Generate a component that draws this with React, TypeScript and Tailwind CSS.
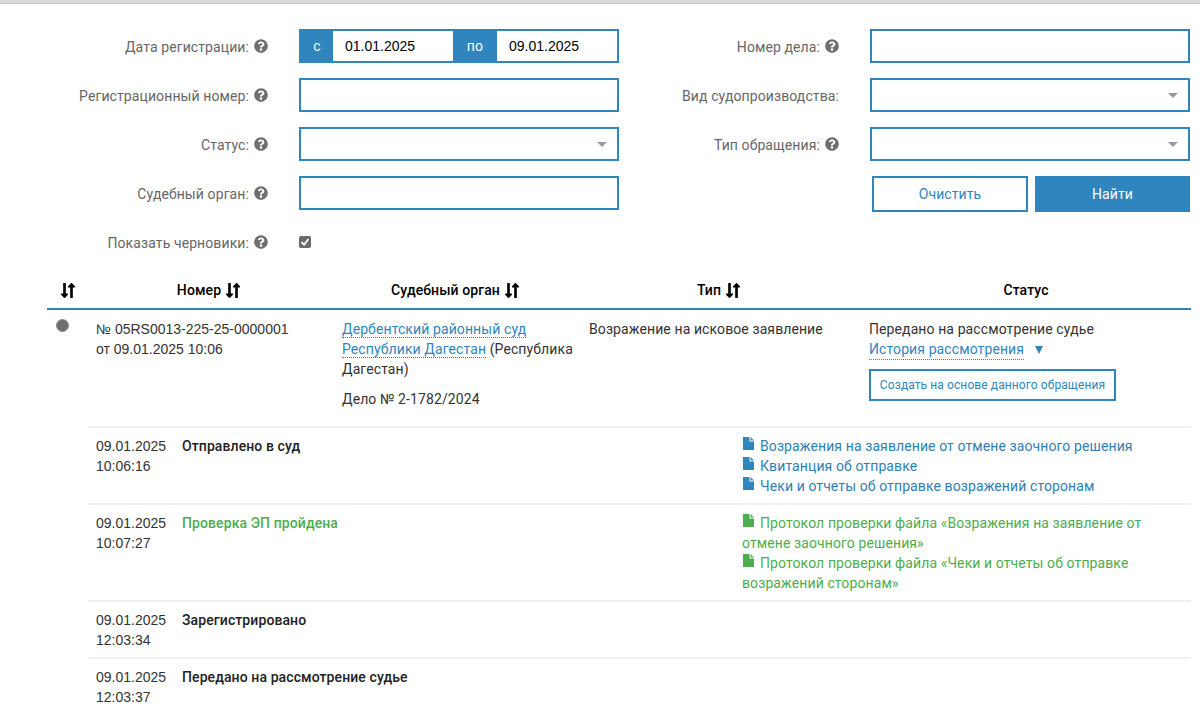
import { FaQuestionCircle, FaLongArrowAltDown, FaLongArrowAltUp } from "react-icons/fa";

const FONT = "font-['Roboto','Noto_Sans',sans-serif] tracking-[0.1px]";
const ARIAL = "font-['Liberation_Sans',Arial,sans-serif] tracking-normal";

function Help() {
  return <FaQuestionCircle className="w-[14px] h-[14px] text-[#6f6f6f] shrink-0" />;
}

function Label({ text, help = true }: { text: string; help?: boolean }) {
  return (
    <div className="flex items-center justify-end gap-[5px] text-[14px] text-[#666666]">
      <span className="pt-[2px]">{text}</span>
      {help && <Help />}
    </div>
  );
}

function Box({ select = false }: { select?: boolean }) {
  return (
    <div className="h-[34px] border-2 border-[#2f85bd] bg-white flex items-center justify-end pr-[10px]">
      {select && <div className="w-0 h-0 border-x-[5px] border-x-transparent border-t-[5px] border-t-[#999999]" />}
    </div>
  );
}

function Sort() {
  return (
    <span className="inline-flex items-center -space-x-[4px] text-black">
      <FaLongArrowAltDown className="w-[11px] h-[17px]" />
      <FaLongArrowAltUp className="w-[11px] h-[17px]" />
    </span>
  );
}

function DocIcon({ color }: { color: string }) {
  return (
    <svg viewBox="0 0 11 13" className="inline-block w-[11px] h-[13px] ml-[1px] mr-[6px] align-[1px]" fill={color}>
      <path d="M0 0h6.5v4.5H11V13H0z" />
      <path d="M7.5 0 11 3.5H7.5z" />
    </svg>
  );
}

function Doc({ text, color }: { text: string; color: string }) {
  return (
    <div>
      <DocIcon color={color} />
      <span>{text}</span>
    </div>
  );
}

function Row({
  date,
  time,
  status,
  green,
  h,
  children,
}: {
  date: string;
  time: string;
  status: string;
  green?: boolean;
  h: string;
  children?: React.ReactNode;
}) {
  return (
    <div className={`flex border-t-2 border-[#efefef] pt-[8px] leading-[20px] ${h}`}>
      <div className={`w-[94px] pl-[8px] shrink-0 text-[14px] text-[#333333] ${ARIAL}`}>
        <div>{date}</div>
        <div>{time}</div>
      </div>
      <div className={`w-[560px] shrink-0 text-[14px] font-medium ${green ? "text-[#4cae4c]" : "text-[#222222]"}`}>
        {status}
      </div>
      <div className={`flex-1 pr-[40px] text-[14px] ${green ? "text-[#4cae4c]" : "text-[#2f7fb5]"}`}>{children}</div>
    </div>
  );
}

export default function App() {
  return (
    <div className={`w-[1200px] h-[716px] overflow-hidden bg-white ${FONT}`}>
      <div className="h-[4px] bg-[#d9d9d9] border-b border-[#c8c8c8]" />
      <div className="flex pt-[25px] pl-[10px]">
        <div className="w-[609px] grid grid-cols-[258px_320px] gap-x-[31px] gap-y-[15px] items-center">
          <Label text="Дата регистрации:" />
          <div className="h-[34px] border-2 border-[#2f85bd] flex bg-white">
            <div className="w-[32px] bg-[#2f85bd] text-white text-[14px] flex items-center justify-center">с</div>
            <div className={`w-[120px] pl-[12px] flex items-center text-[14px] text-black ${ARIAL}`}>01.01.2025</div>
            <div className="w-[44px] bg-[#2f85bd] text-white text-[14px] flex items-center justify-center">по</div>
            <div className={`flex-1 pl-[12px] flex items-center text-[14px] text-black ${ARIAL}`}>09.01.2025</div>
          </div>
          <Label text="Регистрационный номер:" />
          <Box />
          <Label text="Статус:" />
          <Box select />
          <Label text="Судебный орган:" />
          <Box />
          <Label text="Показать черновики:" />
          <div className="h-[34px] flex items-center">
            <div className="w-[12px] h-[12px] rounded-[2px] bg-[#6b6b6b] flex items-center justify-center">
              <svg viewBox="0 0 12 12" className="w-[12px] h-[12px]" fill="none" stroke="#fff" strokeWidth="1.8">
                <path d="M2.5 6.2 5 8.7 9.5 3" />
              </svg>
            </div>
          </div>
        </div>
        <div className="ml-[51px] w-[520px] grid grid-cols-[169px_320px] gap-x-[31px] gap-y-[15px] items-center content-start">
          <Label text="Номер дела:" />
          <Box />
          <Label text="Вид судопроизводства:" help={false} />
          <Box select />
          <Label text="Тип обращения:" />
          <Box select />
          <div />
          <div className="flex gap-[7px] pl-[2px] h-[36px] text-[14px]">
            <button className="w-[156px] border-2 border-[#2f85bd] text-[#2f85bd] bg-white">Очистить</button>
            <button className="w-[155px] bg-[#2f85bd] text-white">Найти</button>
          </div>
        </div>
      </div>

      <div className="ml-[47px] w-[1144px] mt-[17px]">
        <div className="flex h-[34px] items-center pb-[4px] border-b-2 border-[#2f85bd] text-[14px] font-medium text-black">
          <div className="w-[41px] flex justify-center"><Sort /></div>
          <div className="w-[246px] flex justify-center items-center gap-[3px] pr-[3px]">Номер <Sort /></div>
          <div className="w-[247px] flex justify-center items-center gap-[3px] pr-[3px]">Судебный орган <Sort /></div>
          <div className="w-[280px] flex justify-center items-center gap-[3px] pr-[3px]">Тип <Sort /></div>
          <div className="w-[330px] flex justify-center">Статус</div>
        </div>
        <div className="flex h-[116px] pt-[9px] text-[14px] leading-[20px] text-[#333333]">
          <div className="w-[41px] pl-[9px]">
            <div className="w-[13px] h-[13px] rounded-full bg-[#6f6f6f] border border-[#8a8a8a]" />
          </div>
          <div className={`w-[246px] pl-[8px] ${ARIAL}`}>
            <div>№ 05RS0013-225-25-0000001</div>
            <div>от 09.01.2025 10:06</div>
          </div>
          <div className="w-[247px] pl-[8px] pr-[4px]">
            <div>
              <span className="text-[#2f85bd] border-b border-dotted border-[#2f85bd]">Дербентский районный суд</span>
            </div>
            <div>
              <span className="text-[#2f85bd] border-b border-dotted border-[#2f85bd]">Республики Дагестан</span> (Республика
            </div>
            <div>Дагестан)</div>
            <div className="mt-[10px]">Дело № 2-1782/2024</div>
          </div>
          <div className="w-[280px] pl-[8px]">Возражение на исковое заявление</div>
          <div className="w-[330px] pl-[8px]">
            <div>Передано на рассмотрение судье</div>
            <div className="flex items-center">
              <span className="text-[#2f85bd] border-b border-dotted border-[#2f85bd]">История рассмотрения</span>
              <span className="ml-[11px] w-0 h-0 border-x-[4.5px] border-x-transparent border-t-[8px] border-t-[#2f85bd]" />
            </div>
            <button className="mt-[9px] h-[32px] w-[247px] border-2 border-[#2f85bd] text-[#2f85bd] text-[12px] bg-white">
              Создать на основе данного обращения
            </button>
          </div>
        </div>
        <div className="ml-[41px]">
          <Row date="09.01.2025" time="10:06:16" status="Отправлено в суд" h="h-[77px]">
            <Doc color="#2f85bd" text="Возражения на заявление от отмене заочного решения" />
            <Doc color="#2f85bd" text="Квитанция об отправке" />
            <Doc color="#2f85bd" text="Чеки и отчеты об отправке возражений сторонам" />
          </Row>
          <Row date="09.01.2025" time="10:07:27" status="Проверка ЭП пройдена" green h="h-[97px]">
            <Doc color="#4cae4c" text="Протокол проверки файла «Возражения на заявление от отмене заочного решения»" />
            <Doc color="#4cae4c" text="Протокол проверки файла «Чеки и отчеты об отправке возражений сторонам»" />
          </Row>
          <Row date="09.01.2025" time="12:03:34" status="Зарегистрировано" h="h-[57px]" />
          <Row date="09.01.2025" time="12:03:37" status="Передано на рассмотрение судье" h="h-[58px]" />
        </div>
      </div>
    </div>
  );
}
